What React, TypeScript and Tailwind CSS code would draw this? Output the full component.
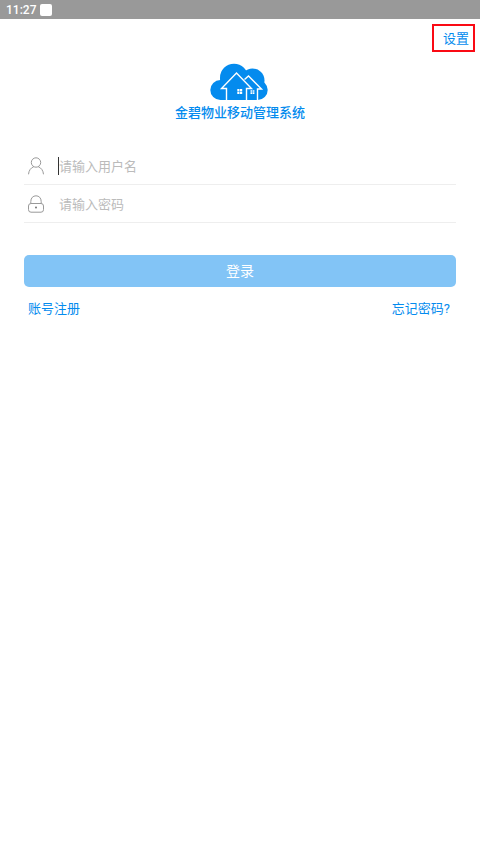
import { useState } from "react";

const FONT = "font-[Roboto,'Noto_Sans_CJK_SC',sans-serif]";

function CloudLogo() {
  return (
    <svg viewBox="0 0 60 37" className="w-[60px] h-[37px]" aria-hidden="true">
      <g fill="#048bee">
        <circle cx="24" cy="14.700" r="14" />
        <circle cx="42.500" cy="17.500" r="12" />
        <circle cx="10.300" cy="27" r="10" />
        <circle cx="47.700" cy="27" r="10" />
        <path d="M10.300 15H47.700V37H10.300z" />
      </g>
      <g fill="none" stroke="#fff" strokeWidth="1.4">
        <path d="M16.500 37V25.500H11.500L26.500 10L41.500 25.500H36.500V37" />
        <path d="M34.500 16.500L38.500 13L51.500 26H47.500V37" />
      </g>
      <g fill="#fff">
        <path d="M27.300 26h2.200v2.200h-2.200zM30 26h2.200v2.200h-2.200zM27.300 28.700h2.200v2.200h-2.200zM30 28.700h2.200v2.200h-2.200z" />
        <path d="M40.500 27.200h1.700v1.600h-1.700zM42.700 27.200h1.700v1.600h-1.700zM40.500 29.300h1.700v1.600h-1.700zM42.700 29.300h1.700v1.600h-1.700z" />
      </g>
    </svg>
  );
}

function UserIcon() {
  return (
    <svg viewBox="0 0 16 18" className="w-4 h-[18px]" fill="none" stroke="#999" aria-hidden="true">
      <circle cx="8" cy="5.500" r="4.700" />
      <path d="M.5 17.300C.8 13.500 2.800 10.800 5.800 9.700M15.500 17.300C15.200 13.500 13.200 10.800 10.200 9.700" />
    </svg>
  );
}

function LockIcon() {
  return (
    <svg viewBox="0 0 16 18" className="w-4 h-[18px]" fill="none" stroke="#999" aria-hidden="true">
      <path d="M2.800 8.500V6.500C2.800 3 5 .8 8 .8S13.200 3 13.200 6.500V8.500" />
      <rect x=".5" y="8.500" width="15" height="8.700" rx="2.500" />
      <circle cx="8" cy="12.500" r=".9" fill="#666" stroke="none" />
    </svg>
  );
}

export default function App() {
  const [username, setUsername] = useState("");
  const [password, setPassword] = useState("");

  return (
    <div className={`min-h-screen bg-white text-[13px] leading-5 text-[#048bee] ${FONT}`}>
      {/* Status bar */}
      <div className="flex h-[19px] items-center gap-1 bg-[#999] px-1.5 text-xs font-medium text-white">
        <span>11:27</span>
        <span className="size-3 rounded-xs bg-white" />
      </div>

      <header className="flex justify-end p-[5px]">
        <button type="button" className="h-7 border-2 border-[#fa0a14] pt-0.5 pr-1 pl-[9px]">
          设置
        </button>
      </header>

      <main className="px-6">
        <div className="flex flex-col items-center pt-1.5">
          <CloudLogo />
          <h1 className="mt-[3px] font-medium">金碧物业移动管理系统</h1>
        </div>

        <form className="mt-6" onSubmit={(e) => e.preventDefault()}>
          <div className="flex h-[38px] items-center border-b border-[#eee] pl-1">
            <label htmlFor="username" aria-label="用户名">
              <UserIcon />
            </label>
            {/* left border is the text cursor */}
            <input
              id="username"
              type="text"
              value={username}
              onChange={(e) => setUsername(e.target.value)}
              placeholder="请输入用户名"
              className="ml-[14px] h-[18px] min-w-0 flex-1 border-l border-[#333] pt-0.5 outline-none placeholder:text-[#bbb]"
            />
          </div>
          <div className="flex h-[38px] items-center border-b border-[#eee] pl-1">
            <label htmlFor="password" aria-label="密码">
              <LockIcon />
            </label>
            <input
              id="password"
              type="password"
              value={password}
              onChange={(e) => setPassword(e.target.value)}
              placeholder="请输入密码"
              className="ml-[14px] h-[18px] min-w-0 flex-1 border-l border-transparent pt-0.5 outline-none placeholder:text-[#bbb]"
            />
          </div>

          <button type="submit" className="mt-8 h-8 w-full rounded-[5px] bg-[#82c4f6] text-sm text-white">
            登录
          </button>
        </form>

        <div className="mt-3 flex justify-between pr-1.5 pl-1">
          <a href="#register">账号注册</a>
          <a href="#forgot">忘记密码?</a>
        </div>
      </main>
    </div>
  );
}
